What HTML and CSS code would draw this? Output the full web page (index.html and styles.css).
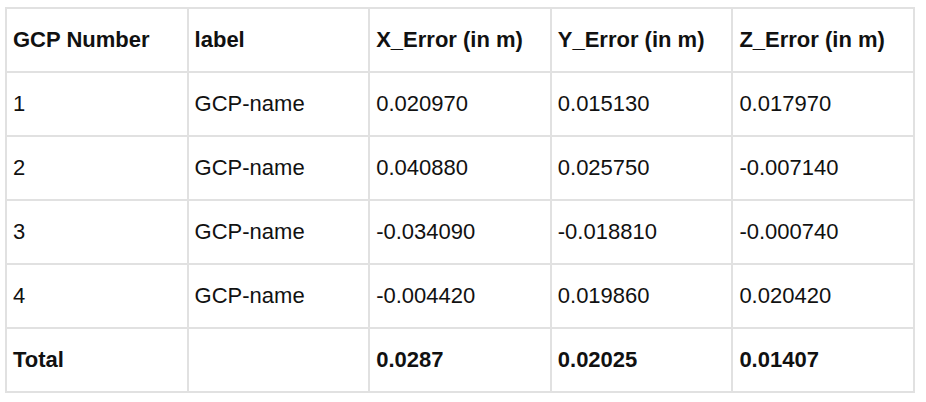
FILE: index.html
```html
<!DOCTYPE html>
<html>
<head>
<meta charset="utf-8">
<link rel="stylesheet" href="styles.css">
</head>
<body>
<table class="gcp">
<thead>
<tr><th>GCP Number</th><th>label</th><th>X_Error (in m)</th><th>Y_Error (in m)</th><th>Z_Error (in m)</th></tr>
</thead>
<tbody>
<tr><td>1</td><td>GCP-name</td><td>0.020970</td><td>0.015130</td><td>0.017970</td></tr>
<tr><td>2</td><td>GCP-name</td><td>0.040880</td><td>0.025750</td><td>-0.007140</td></tr>
<tr><td>3</td><td>GCP-name</td><td>-0.034090</td><td>-0.018810</td><td>-0.000740</td></tr>
<tr><td>4</td><td>GCP-name</td><td>-0.004420</td><td>0.019860</td><td>0.020420</td></tr>
<tr class="total"><td>Total</td><td></td><td>0.0287</td><td>0.02025</td><td>0.01407</td></tr>
</tbody>
</table>
</body>
</html>
```
FILE: styles.css
```css
html, body { margin: 0; padding: 0; background: #fff; }
body { padding: 7px 0 0 5px; font-family: "Liberation Sans", Arial, sans-serif; color: #111; }
.gcp { border-collapse: collapse; width: 910px; table-layout: fixed; }
.gcp th, .gcp td {
  border: 2px solid #e1e1e1;
  height: 64px;
  padding: 0 6px;
  font-size: 22px;
  text-align: left;
  vertical-align: middle;
  font-weight: normal;
  box-sizing: border-box;
}
.gcp th { font-weight: bold; }
.gcp .total td { font-weight: bold; }
```
